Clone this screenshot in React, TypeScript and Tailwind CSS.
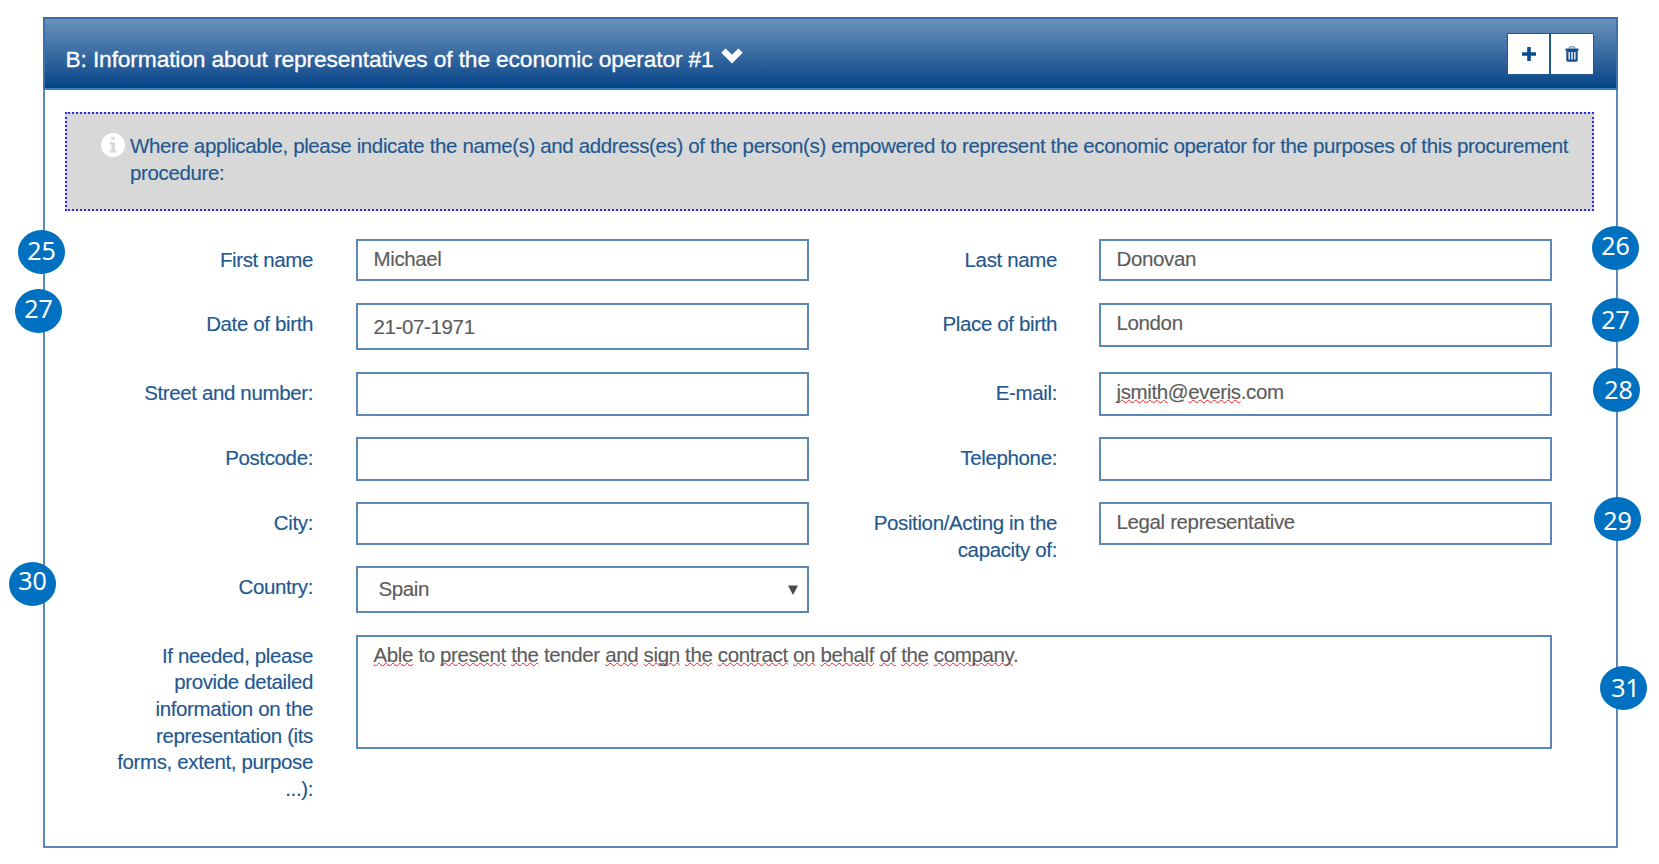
import type { ReactNode } from "react";

function Wavy({ children }: { children: ReactNode }) {
  return (
    <span className="underline decoration-[#f01c1c] decoration-wavy decoration-[1.3px] underline-offset-[0px] [text-decoration-skip-ink:none]">
      {children}
    </span>
  );
}

function Label({ children, className = "pt-[8px]" }: { children: ReactNode; className?: string }) {
  return <div className={`text-right text-[#23588f] ${className}`}>{children}</div>;
}

function Field({ children, className }: { children?: ReactNode; className: string }) {
  return (
    <div className={`self-start border-2 border-[#5b88b5] bg-white pl-[15.5px] whitespace-nowrap text-[#5c5c5c] ${className}`}>
      {children}
    </div>
  );
}

function Badge({ label, className, textClass }: { label: string; className: string; textClass: string }) {
  return (
    <div className={`absolute flex h-[44px] w-[47px] items-center justify-center rounded-[50%] bg-[#0070c0] ${className}`}>
      <span className={`relative font-['Open_Sans',sans-serif] text-[25px] leading-none tracking-[0px] text-white ${textClass}`}>{label}</span>
    </div>
  );
}

const misspelt = new Set(["Able", "present", "the", "and", "sign", "contract", "on", "behalf", "of", "company"]);
const details = "Able to present the tender and sign the contract on behalf of the company";

export default function App() {
  return (
    <div className="relative h-[864px] w-[1659px] overflow-hidden bg-white pt-[17px] pl-[43px] font-['Liberation_Sans',sans-serif] text-[20.5px] leading-[26.67px] tracking-[-0.37px] [-webkit-text-stroke:0.15px]">
      <section className="h-[831px] w-[1575px] border-2 border-[#5b88b5]">
        <header className="-mx-[2px] -mt-[2px] flex h-[73px] items-center justify-between border-2 border-x-[#3a72a9] border-t-[#3b6fa4] border-b-[#3f7fbc] bg-linear-to-b from-[#6892bb] to-[#004488] pr-[23px] pl-[20.5px]">
          <h1 className="flex items-center pt-[12px] text-[22.8px] tracking-[-0.15px] text-white [-webkit-text-stroke:0.3px]">
            B: Information about representatives of the economic operator #1
            <svg viewBox="0 0 22 16" className="-mt-[7px] ml-[7px] h-[16px] w-[22px]" fill="#fff">
              <path d="M4.6 0.5 11 6.8l6.4-6.3L21.7 4.8 11 15.6 0.3 4.8z" />
            </svg>
          </h1>
          <div className="flex gap-[2px]">
            <button className="flex h-[40px] w-[41px] items-center justify-center bg-white outline outline-[#1f5a94]">
              <svg viewBox="0 0 14 14" className="mt-px h-[14px] w-[14px]" fill="#0b4a8c">
                <path d="M5.2 0.5Q5.2 0 5.7 0h2.6q.5 0 .5.5v4.7h4.7q.5 0 .5.5v2.6q0 .5-.5.5H8.8v4.7q0 .5-.5.5H5.7q-.5 0-.5-.5V8.8H.5Q0 8.8 0 8.300V5.700Q0 5.200.5 5.200h4.700z" />
              </svg>
            </button>
            <button className="flex h-[40px] w-[42px] items-center justify-center bg-white outline outline-[#1f5a94]">
              <svg viewBox="0 0 14 16" className="mt-px h-[16px] w-[14px]">
                <path d="M4.300 2.600V1.700q0-.9.9-.9h3.600q.9 0 .9.9v.9" fill="none" stroke="#6e93b8" strokeWidth="1.300" />
                <path fillRule="evenodd" fill="#174f8b" d="M1 2.500h12q.7 0 .7.700V4.500H.3V3.200q0-.7.700-.7zM1.300 4.500h11.400v9.700q0 1.500-1.500 1.500H2.800q-1.500 0-1.500-1.500zM3.500 6v7.500h1.300V6zM6.300 6v7.500h1.400V6zM9.200 6v7.500h1.300V6z" />
              </svg>
            </button>
          </div>
        </header>

        <div className="mt-[22px] ml-[20px] flex h-[99px] w-[1529px] items-start border-2 border-dotted border-[#2a2af5] bg-[#d8d8d8] pt-[19px] pl-[34px] text-[#23588f]">
          <svg viewBox="0 0 24 24" className="mr-[5px] h-[24px] w-[24px] shrink-0">
            <circle cx="12" cy="12" r="12" fill="#fff" />
            <path fill="#d8d8d8" d="M10.200 3.700h3.700v3H10.200zM8.700 9.300h5.200v8.200h1.700v2H8.700v-2h1.700v-6.200H8.700z" />
          </svg>
          <p className="whitespace-nowrap">
            Where applicable, please indicate the name(s) and address(es) of the person(s) empowered to represent the economic operator for the purposes of this procurement
            <br />
            procedure:
          </p>
        </div>

        <div className="mt-[28px] grid grid-cols-[268px_43px_453px_248px_42px_453px] grid-rows-[64px_69px_64.5px_65px_64px_69.500px_150px]">
          <Label>First name</Label>
          <Field className="col-start-3 h-[42px] pt-[5px]">Michael</Field>
          <Label>Last name</Label>
          <Field className="col-start-6 h-[42px] pt-[5px]">Donovan</Field>

          <Label>Date of birth</Label>
          <Field className="col-start-3 h-[47px] pt-[8.6px]">21-07-1971</Field>
          <Label>Place of birth</Label>
          <Field className="col-start-6 h-[44px] pt-[4.6px]">London</Field>

          <Label>Street and number:</Label>
          <Field className="col-start-3 h-[44px]" />
          <Label>E-mail:</Label>
          <Field className="col-start-6 h-[44px] pt-[4.6px]">
            <Wavy>jsmith</Wavy>@<Wavy>everis</Wavy>.com
          </Field>

          <Label>Postcode:</Label>
          <Field className="col-start-3 h-[44px]" />
          <Label>Telephone:</Label>
          <Field className="col-start-6 h-[44px]" />

          <Label className="pt-[8.6px]">City:</Label>
          <Field className="col-start-3 h-[43px]" />
          <Label className="pt-[8.6px]">
            Position/Acting in the
            <br />
            capacity of:
          </Label>
          <Field className="col-start-6 h-[43px] pt-[5.4px]">Legal representative</Field>

          <Label className="pt-[8.7px]">Country:</Label>
          <Field className="col-start-3 flex h-[47px] justify-between pt-[8.2px] pr-[9px]">
            <span className="pl-[5px]">Spain</span>
            <svg viewBox="0 0 10 10" className="mt-[9px] h-[10px] w-[10px]" fill="#4a4a4a">
              <path d="M0 0.500h10L5 10z" />
            </svg>
          </Field>

          <Label className="col-start-1 pt-[7.800px]">
            If needed, please
            <br />
            provide detailed
            <br />
            information on the
            <br />
            representation (its
            <br />
            forms, extent, purpose
            <br />
            ...):
          </Label>
          <Field className="col-span-4 col-start-3 h-[114px] pt-[4.800px]">
            {details.split(" ").map((word, i) => (
              <span key={i}>
                {i > 0 && " "}
                {misspelt.has(word) ? <Wavy>{word}</Wavy> : word}
              </span>
            ))}
            .
          </Field>
        </div>
      </section>

      <Badge label="25" className="top-[230px] left-[18px]" textClass="-top-[2px]" />
      <Badge label="27" className="top-[288.5px] left-[15px]" textClass="-top-[2.5px]" />
      <Badge label="30" className="top-[561.5px] left-[9px]" textClass="-top-[3px]" />
      <Badge label="26" className="top-[226px] left-[1592px]" textClass="-top-[3px]" />
      <Badge label="27" className="top-[298px] left-[1592px]" textClass="-top-[1px]" />
      <Badge label="28" className="top-[367.500px] left-[1593px]" textClass="left-[2px]" />
      <Badge label="29" className="top-[496.500px] left-[1594px]" textClass="top-[1.500px]" />
      <Badge label="31" className="top-[665.500px] left-[1600px]" textClass="left-[2px]" />
    </div>
  );
}
